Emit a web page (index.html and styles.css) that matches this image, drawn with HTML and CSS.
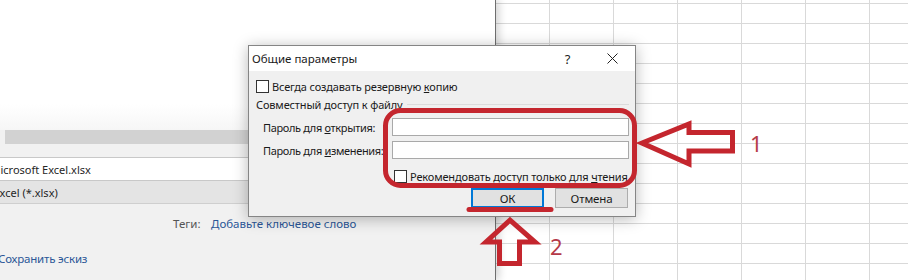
FILE: index.html
```html
<!DOCTYPE html>
<html lang="ru">
<head>
<meta charset="utf-8">
<title>Общие параметры</title>
<link rel="stylesheet" href="styles.css">
</head>
<body>
<div class="screen">
  <div class="backstage">
    <div class="bs-top"></div>
    <div class="bs-bottom">
      <div class="scrollbar"></div>
      <div class="filename"><span class="clip-m">Microsoft Excel.xlsx</span></div>
      <div class="filetype"><span class="clip-e">Excel (*.xlsx)</span></div>
      <div class="tags"><span class="tag-label">Теги:</span><span class="link">Добавьте ключевое слово</span></div>
      <div class="thumb"><span class="link clip-c">Сохранить эскиз</span></div>
    </div>
  </div>
  <div class="sheet"></div>

  <div class="dialog">
    <div class="titlebar">
      <span class="title">Общие параметры</span>
      <span class="tb-btn help">?</span>
      <span class="tb-btn close"><svg width="11" height="11" viewBox="0 0 11 11"><path d="M0.5 0.5 L10.5 10.5 M10.5 0.5 L0.5 10.5" stroke="#222" stroke-width="1" fill="none"/></svg></span>
    </div>
    <div class="dlg-body">
      <div class="check-row first"><span class="box"></span><span>Всегда создавать резервную <u>к</u>опию</span></div>
      <div class="group"><span>Совместный доступ к файлу</span><span class="group-line"></span></div>
      <div class="pw-row"><span class="pw-label">Пароль для <u>о</u>ткрытия:</span><span class="field"></span></div>
      <div class="pw-row second"><span class="pw-label">Пароль для <u>и</u>зменения:</span><span class="field"></span></div>
      <div class="check-row rec"><span class="box"></span><span>Рекомендовать доступ только для <u>ч</u>тения</span></div>
      <div class="buttons"><span class="btn default">ОК</span><span class="btn">Отмена</span></div>
    </div>
  </div>

  <svg class="marks" width="908" height="280" viewBox="0 0 908 280">
    <g fill="none" stroke="#c4262e" stroke-width="5" stroke-linejoin="miter">
      <rect x="385.5" y="110.5" width="249" height="75" rx="15" ry="15"/>
      <line x1="469" y1="209.5" x2="551" y2="209.5" stroke-linecap="round"/>
      <polygon points="642,143 689,124 689,132.5 732.5,132.5 732.5,151 689,151 689,164"/>
      <polygon points="510,220 486,242 499.5,242 499.5,263.5 519.5,263.5 519.5,242 535,242"/>
    </g>
    <text class="num" x="750" y="152">1</text>
    <text class="num" x="550" y="255">2</text>
  </svg>
</div>
</body>
</html>
```

FILE: styles.css
```css
html, body {
  margin: 0;
  padding: 0;
}
body {
  width: 908px;
  height: 280px;
  overflow: hidden;
  background: #fff;
  font-family: "Noto Sans", "Open Sans", sans-serif;
  color: #222;
}
.screen {
  position: relative;
  display: flex;
  width: 908px;
  height: 280px;
  overflow: hidden;
}

/* left backstage panel */
.backstage {
  width: 495px;
  flex: none;
  display: flex;
  flex-direction: column;
  border-right: 1px solid #6e6e6e;
  box-shadow: 3px 0 8px rgba(0, 0, 0, 0.18);
  background: #f1f1f1;
  overflow: hidden;
  position: relative;
  z-index: 1;
}
.bs-top {
  height: 130px;
  background: linear-gradient(to bottom, #ffffff 0, #ffffff 80%, #f6f6f6 100%);
}
.bs-bottom {
  flex: 1;
  display: flex;
  flex-direction: column;
  font-size: 11.5px;
}
.scrollbar {
  height: 14px;
  margin-left: 5px;
  width: 300px;
  background: #d2d2d2;
}
.filename {
  margin-top: 13px;
  height: 22px;
  width: 300px;
  background: #fff;
  border-top: 1px solid #c8c8c8;
  border-bottom: 1px solid #c8c8c8;
  display: flex;
  align-items: center;
  white-space: nowrap;
  color: #262626;
  font-size: 11px;
}
.clip-m { margin-left: -9.5px; }
.filetype {
  height: 22px;
  width: 300px;
  background: #e4e4e4;
  border-bottom: 1px solid #cfcfcf;
  display: flex;
  align-items: center;
  white-space: nowrap;
  color: #262626;
  font-size: 11px;
}
.clip-e { margin-left: -6.5px; }
.tags {
  margin-top: 10px;
  height: 18px;
  display: flex;
  align-items: center;
  padding-left: 173px;
  white-space: nowrap;
}
.tag-label {
  color: #555;
  width: 38px;
}
.link {
  color: #2b5797;
}
.thumb {
  margin-top: 17px;
  height: 18px;
  display: flex;
  align-items: center;
  white-space: nowrap;
}
.clip-c { margin-left: -2px; letter-spacing: -0.2px; }

/* excel grid */
.sheet {
  flex: 1;
  background-color: #fff;
  background-image:
    linear-gradient(to right, #d9d9d9 1px, transparent 1px),
    linear-gradient(to bottom, #d9d9d9 1px, transparent 1px);
  background-size: 64px 100%, 100% 20px;
  background-position: 53px 0, 0 3px;
}

/* dialog */
.dialog {
  position: absolute;
  left: 248px;
  top: 45px;
  width: 386px;
  height: 170px;
  border: 1px solid #858585;
  background: #f0f0f0;
  box-shadow: 0 2px 14px rgba(0, 0, 0, 0.28);
  z-index: 2;
  display: flex;
  flex-direction: column;
  font-size: 11px;
  letter-spacing: -0.15px;
  color: #1a1a1a;
}
.titlebar {
  height: 25px;
  background: #fff;
  display: flex;
  align-items: center;
}
.title {
  flex: 1;
  padding-left: 3px;
  font-size: 11.5px;
  letter-spacing: 0;
  color: #1a1a1a;
}
.tb-btn {
  width: 45px;
  height: 25px;
  display: flex;
  align-items: center;
  justify-content: center;
  font-size: 13px;
  color: #222;
}
.dlg-body {
  display: flex;
  flex-direction: column;
  padding: 0 6px 0 7px;
}
.check-row {
  height: 16px;
  display: flex;
  align-items: center;
  white-space: nowrap;
}
.check-row.first {
  margin-top: 7px;
}
.box {
  width: 11px;
  height: 11px;
  border: 1px solid #333;
  background: #fff;
  margin-right: 3px;
  flex: none;
}
.group {
  margin-top: 2px;
  height: 16px;
  display: flex;
  align-items: center;
  white-space: nowrap;
}
.group-line {
  flex: 1;
  height: 1px;
  background: #dcdcdc;
  margin-left: 4px;
}
.pw-row {
  margin-top: 6px;
  height: 18px;
  display: flex;
  align-items: center;
  white-space: nowrap;
}
.pw-row.second {
  margin-top: 5px;
}
.pw-label {
  width: 129px;
  padding-left: 7px;
  flex: none;
  letter-spacing: -0.35px;
}
.field {
  flex: 1;
  height: 16px;
  background: #fff;
  border: 1px solid #a9a9a9;
}
.check-row.rec {
  margin-top: 9px;
  padding-left: 138px;
}
.buttons {
  margin-top: 4px;
  display: flex;
  justify-content: flex-end;
  gap: 11px;
  padding-right: 1px;
}
.btn {
  width: 71px;
  height: 18px;
  border: 1px solid #adadad;
  background: #e1e1e1;
  display: flex;
  align-items: center;
  justify-content: center;
  font-size: 11.5px;
}
.btn.default {
  border: 1px solid #0078d7;
  box-shadow: inset 0 0 0 1px #0078d7;
}

/* annotations */
.marks {
  position: absolute;
  left: 0;
  top: 0;
  z-index: 3;
  pointer-events: none;
}
.num {
  font-family: "Noto Sans", sans-serif;
  font-size: 22px;
  fill: #b53a48;
}
```
